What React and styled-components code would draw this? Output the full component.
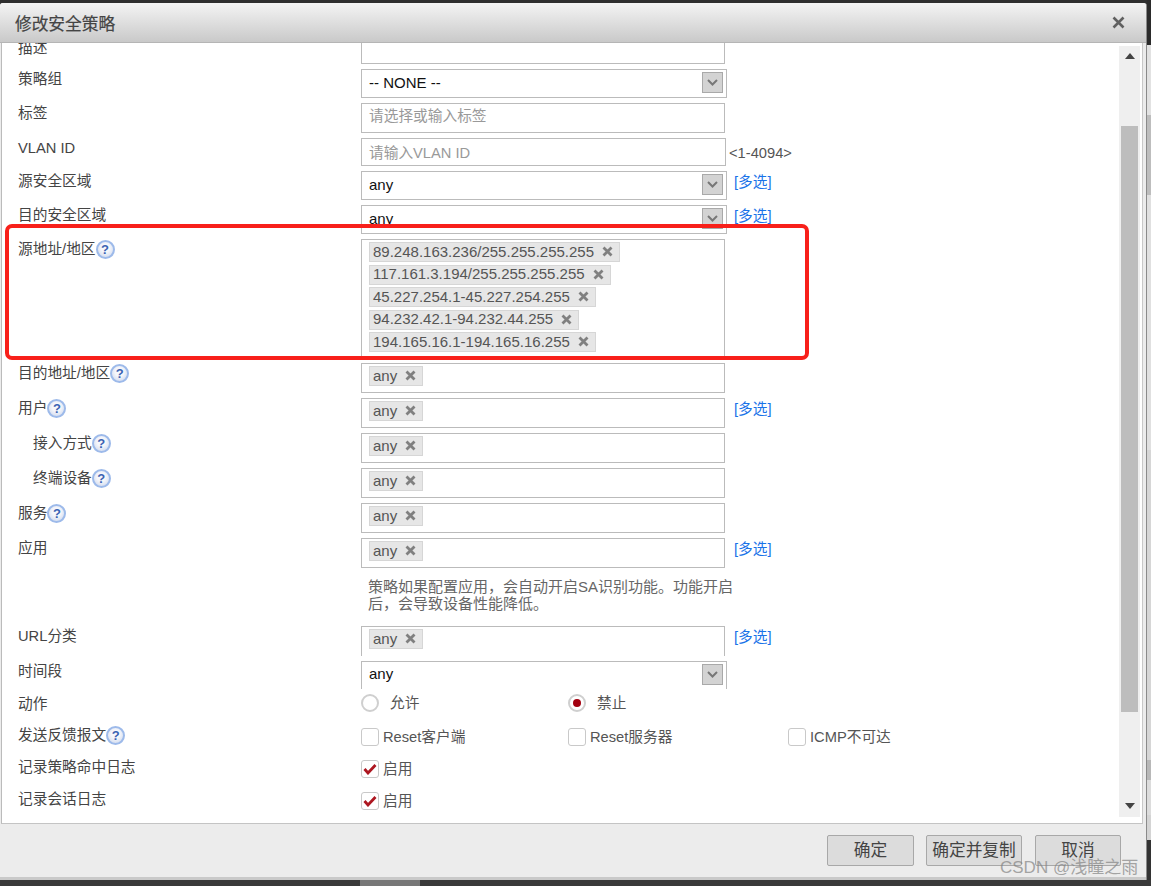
import React from 'react'
import styled, { createGlobalStyle } from 'styled-components'

const GlobalStyle = createGlobalStyle`
  html, body {
    margin: 0;
    padding: 0;
    background: #2f2f2f;
  }
  body {
    font-family: "Liberation Sans", "Noto Sans CJK SC", sans-serif;
    font-size: 14.7px;
    color: #444;
  }
`

const Page = styled.div`
  position: relative;
  display: flex;
  flex-direction: column;
  width: 1151px;
  height: 886px;
  overflow: hidden;
`

const Desk = styled.div`
  display: flex;
  height: 880px;
  padding-top: 3px;
  box-sizing: border-box;
`

const BackStrip = styled.div`
  flex: 1;
  margin-top: -3px;
  background: linear-gradient(
    180deg,
    #2b2b2b 0 45px,
    #e2e2e2 45px 115px,
    #bdbdbd 115px 195px,
    #e0e0e0 195px 450px,
    #d6d6d6 450px 760px,
    #b8b8b8 760px 780px,
    #dcdcdc 780px 815px,
    #d4d4d4 815px 840px,
    #333 840px
  );
`

const BottomStrip = styled.div`
  height: 6px;
  background: linear-gradient(90deg, #3a3a3a 0 360px, #777 360px 420px, #3a3a3a 420px);
`

const Dialog = styled.div`
  width: 1147px;
  display: flex;
  flex-direction: column;
  background: #ececec;
  border-right: 1px solid #8a8a8a;
  box-sizing: border-box;
  border-radius: 3px 3px 0 0;
`

const Header = styled.div`
  height: 39px;
  flex: none;
  display: flex;
  align-items: center;
  justify-content: space-between;
  padding: 0 21px 0 15px;
  background: linear-gradient(180deg, #f4f4f4, #c9c9c9);
  border-bottom: 1px solid #b5b5b5;
  border-radius: 3px 3px 0 0;
`

const Title = styled.div`
  font-size: 16.7px;
  color: #444;
  -webkit-text-stroke: 0.2px #444;
`

const CloseIcon = styled.svg`
  width: 13px;
  height: 13px;
  display: block;
`

const Body = styled.div`
  height: 781px;
  flex: none;
  box-sizing: border-box;
  display: flex;
  margin: 0 3px 0 1px;
  background: #fff;
  border-left: 1px solid #bbb;
  border-right: 1px solid #c8c8c8;
  border-bottom: 1px solid #c4c4c4;
  overflow: hidden;
`

const Scroller = styled.div`
  flex: 1;
  overflow: hidden;
`

const Form = styled.div`
  display: flex;
  flex-direction: column;
  gap: 5px;
  margin-top: -5px;
`

const Row = styled.div`
  display: flex;
  align-items: flex-start;
  ${p => p.$h && `height: ${p.$h}px;`}
`

const Label = styled.div`
  width: 359px;
  flex: none;
  box-sizing: border-box;
  padding-left: ${p => (p.$indent ? 31 : 16)}px;
  padding-top: 0.5px;
  display: flex;
  align-items: center;
  height: 19px;
  line-height: 18px;
  color: #444;
`

const Help = styled.span`
  width: 19px;
  height: 19px;
  margin-top: 2px;
  flex: none;
  border-radius: 50%;
  border: 2px solid #9dbaea;
  box-sizing: border-box;
  background: radial-gradient(circle at 50% 40%, #f6f7fb 0 35%, #c6d2ea 100%);
  color: #3b63b3;
  font-size: 13px;
  font-weight: bold;
  line-height: 15px;
  text-align: center;
`

const Box = styled.div`
  position: relative;
  flex: none;
  box-sizing: border-box;
  width: ${p => p.$w || 364}px;
  height: ${p => p.$h || 30}px;
  border: 1.5px solid #bbb;
  ${p => p.$open && 'border-bottom: none;'}
  background: #fff;
`

const SelectBox = styled(Box)`
  display: flex;
  align-items: ${p => (p.$open ? 'flex-start' : 'center')};
  padding: 0 0 ${p => (p.$open ? 0 : 2)}px 7px;
  font-size: 15px;
  color: #111;
  line-height: 23px;
`

const SelectArrow = styled.span`
  position: absolute;
  top: 2px;
  right: 3px;
  width: 21px;
  height: 21px;
  box-sizing: border-box;
  background: #d3d3d3;
  border: 1.5px solid #a9a9a9;
  display: flex;
  align-items: center;
  justify-content: center;
`

const TextBox = styled(Box)`
  display: flex;
  align-items: ${p => (p.$top ? 'flex-start' : 'center')};
  padding: 0 0 ${p => (p.$top ? 0 : 2)}px 7px;
  color: #999;
`

const TagBox = styled(Box)`
  display: flex;
  flex-direction: column;
  align-items: flex-start;
  gap: 2.5px;
  padding: 2px 0 0 7px;
`

const TagItem = styled.span`
  height: 20px;
  box-sizing: border-box;
  display: inline-flex;
  align-items: center;
  gap: 8px;
  padding: 0 6px 2px 3px;
  background: #e6e6e6;
  border: 1px solid #d6d6d6;
  color: #555;
  font-size: 15px;
`

const TagX = styled.svg`
  width: 11px;
  height: 11px;
  display: block;
  margin-top: 1px;
`

const MultiLink = styled.a`
  margin: 2px 0 0 ${p => p.$ml || 9}px;
  line-height: 18px;
  color: #1a73e8;
`

const RangeHint = styled.span`
  margin: 6px 0 0 3px;
  line-height: 18px;
  color: #555;
`

const HintText = styled.div`
  margin-left: 366px;
  padding: 5px 0 9px;
  width: 372px;
  font-size: 15px;
  line-height: 17px;
  color: #666;
`

const Options = styled.div`
  display: grid;
  grid-template-columns: 207px 220px 1fr;
  flex: 1;
  margin-top: ${p => p.$mt || 0}px;
`

const Option = styled.label`
  display: flex;
  align-items: center;
  gap: ${p => p.$gap || 4}px;
  height: 18px;
  color: #555;
`

const OptionText = styled.span`
  margin-bottom: 3px;
`

const RadioMark = styled.span`
  width: 18px;
  height: 18px;
  box-sizing: border-box;
  border-radius: 50%;
  border: 2px solid #cfcfcf;
  background: #fff;
  display: flex;
  align-items: center;
  justify-content: center;
  &::after {
    content: "";
    width: 8px;
    height: 8px;
    border-radius: 50%;
    background: ${p => (p.$on ? '#a30010' : 'transparent')};
  }
`

const CheckMark = styled.span`
  width: 18px;
  height: 18px;
  flex: none;
  box-sizing: border-box;
  border-radius: 3px;
  border: 1.5px solid #c9c9c9;
  background: #fff;
  display: flex;
  align-items: center;
  justify-content: center;
`

const ScrollTrack = styled.div`
  width: 21px;
  flex: none;
  margin: 3px 2px 6px 0;
  background: #efefef;
  display: flex;
  flex-direction: column;
`

const ArrowCell = styled.div`
  display: flex;
  justify-content: center;
  height: ${p => p.$h}px;
  flex: ${p => (p.$grow ? 1 : 'none')};
  align-items: ${p => (p.$grow ? 'flex-end' : 'flex-start')};
  padding: ${p => (p.$grow ? '0 0 8px' : '7px 0 0')};
  box-sizing: border-box;
`

const ScrollThumb = styled.div`
  width: 17px;
  height: 586px;
  margin-left: 2px;
  background: #bdbdbd;
`

const Footer = styled.div`
  height: 42px;
  flex: none;
  display: flex;
  justify-content: flex-end;
  gap: 12px;
  padding: 11px 25px 0 0;
  border-bottom: 3px solid #c9c9c9;
  background: #ececec;
`

const Button = styled.button`
  width: ${p => p.$w}px;
  height: 31px;
  margin-left: ${p => p.$ml || 0}px;
  padding: 0 0 3px;
  font: inherit;
  font-size: 16.7px;
  color: #444;
  background: #dcdcdc;
  border: 1.5px solid #a8a8a8;
  border-radius: 2px;
`

const RedFrame = styled.div`
  position: absolute;
  left: 5px;
  top: 224px;
  width: 804px;
  height: 136px;
  box-sizing: border-box;
  border: 4px solid #f8201a;
  border-radius: 7px;
  pointer-events: none;
`

const Watermark = styled.div`
  position: absolute;
  left: 1000px;
  top: 857px;
  font-size: 17px;
  line-height: 22px;
  color: rgba(130, 130, 130, 0.7);
  white-space: nowrap;
`

const Chevron = () => (
  <svg width="13" height="9" viewBox="0 0 13 9">
    <path d="M2 2l4.5 4.5L11 2" fill="none" stroke="#777" strokeWidth="2" />
  </svg>
)

const Select = ({ value, h = 29, open }) => (
  <SelectBox $w={366} $h={h} $open={open}>
    {value}
    <SelectArrow>
      <Chevron />
    </SelectArrow>
  </SelectBox>
)

const Tag = ({ children }) => (
  <TagItem>
    {children}
    <TagX viewBox="0 0 11 11">
      <path d="M1.5 1.5l8 8M9.5 1.5l-8 8" stroke="#808080" strokeWidth="2.8" fill="none" />
    </TagX>
  </TagItem>
)

const AnyBox = ({ open }) => (
  <TagBox $h={30} $open={open}>
    <Tag>any</Tag>
  </TagBox>
)

const Check = () => (
  <svg width="14" height="12" viewBox="0 0 14 12">
    <path d="M1.5 6l3.5 4L12.5 2" fill="none" stroke="#ad1620" strokeWidth="2.8" />
  </svg>
)

const sourceAddresses = [
  '89.248.163.236/255.255.255.255',
  '117.161.3.194/255.255.255.255',
  '45.227.254.1-45.227.254.255',
  '94.232.42.1-94.232.44.255',
  '194.165.16.1-194.165.16.255',
]

export default function App() {
  return (
    <Page>
      <GlobalStyle />
      <Desk>
        <Dialog>
          <Header>
            <Title>修改安全策略</Title>
            <CloseIcon viewBox="0 0 13 13">
              <path d="M1.5 1.5l10 10M11.5 1.5l-10 10" stroke="#606060" strokeWidth="2.6" fill="none" />
            </CloseIcon>
          </Header>
          <Body>
            <Scroller>
              <Form>
                <Row>
                  <Label>描述</Label>
                  <Box $h={26} />
                </Row>
                <Row>
                  <Label>策略组</Label>
                  <Select value="-- NONE --" />
                </Row>
                <Row>
                  <Label>标签</Label>
                  <TextBox $top>请选择或输入标签</TextBox>
                </Row>
                <Row>
                  <Label>VLAN ID</Label>
                  <TextBox $h={28} $w={365}>请输入VLAN ID</TextBox>
                  <RangeHint>&lt;1-4094&gt;</RangeHint>
                </Row>
                <Row>
                  <Label>源安全区域</Label>
                  <Select value="any" />
                  <MultiLink $ml={7}>[多选]</MultiLink>
                </Row>
                <Row>
                  <Label>目的安全区域</Label>
                  <Select value="any" />
                  <MultiLink $ml={7}>[多选]</MultiLink>
                </Row>
                <Row>
                  <Label>源地址/地区<Help>?</Help></Label>
                  <TagBox $h={119}>
                    {sourceAddresses.map(addr => (
                      <Tag key={addr}>{addr}</Tag>
                    ))}
                  </TagBox>
                </Row>
                <Row>
                  <Label>目的地址/地区<Help>?</Help></Label>
                  <AnyBox />
                </Row>
                <Row>
                  <Label>用户<Help>?</Help></Label>
                  <AnyBox />
                  <MultiLink>[多选]</MultiLink>
                </Row>
                <Row>
                  <Label $indent>接入方式<Help>?</Help></Label>
                  <AnyBox />
                </Row>
                <Row>
                  <Label $indent>终端设备<Help>?</Help></Label>
                  <AnyBox />
                </Row>
                <Row>
                  <Label>服务<Help>?</Help></Label>
                  <AnyBox />
                </Row>
                <Row>
                  <Label>应用</Label>
                  <AnyBox />
                  <MultiLink>[多选]</MultiLink>
                </Row>
                <HintText>策略如果配置应用，会自动开启SA识别功能。功能开启后，会导致设备性能降低。</HintText>
                <Row>
                  <Label>URL分类</Label>
                  <AnyBox open />
                  <MultiLink>[多选]</MultiLink>
                </Row>
                <Row>
                  <Label>时间段</Label>
                  <Select value="any" h={28} open />
                </Row>
                <Row $h={26}>
                  <Label>动作</Label>
                  <Options>
                    <Option $gap={11}><RadioMark /><OptionText>允许</OptionText></Option>
                    <Option $gap={11}><RadioMark $on /><OptionText>禁止</OptionText></Option>
                  </Options>
                </Row>
                <Row $h={27}>
                  <Label>发送反馈报文<Help>?</Help></Label>
                  <Options $mt={3}>
                    <Option><CheckMark /><OptionText>Reset客户端</OptionText></Option>
                    <Option><CheckMark /><OptionText>Reset服务器</OptionText></Option>
                    <Option><CheckMark /><OptionText>ICMP不可达</OptionText></Option>
                  </Options>
                </Row>
                <Row $h={27}>
                  <Label>记录策略命中日志</Label>
                  <Options $mt={3}>
                    <Option><CheckMark><Check /></CheckMark><OptionText>启用</OptionText></Option>
                  </Options>
                </Row>
                <Row $h={27}>
                  <Label>记录会话日志</Label>
                  <Options $mt={3}>
                    <Option><CheckMark><Check /></CheckMark><OptionText>启用</OptionText></Option>
                  </Options>
                </Row>
              </Form>
            </Scroller>
            <ScrollTrack>
              <ArrowCell $h={80}>
                <svg width="10" height="6" viewBox="0 0 10 6"><path d="M5 0l5 6H0z" fill="#444" /></svg>
              </ArrowCell>
              <ScrollThumb />
              <ArrowCell $grow>
                <svg width="10" height="6" viewBox="0 0 10 6"><path d="M0 0h10L5 6z" fill="#444" /></svg>
              </ArrowCell>
            </ScrollTrack>
          </Body>
          <Footer>
            <Button $w={87}>确定</Button>
            <Button $w={96}>确定并复制</Button>
            <Button $w={86} $ml={1}>取消</Button>
          </Footer>
        </Dialog>
        <BackStrip />
      </Desk>
      <BottomStrip />
      <RedFrame />
      <Watermark>CSDN @浅瞳之雨</Watermark>
    </Page>
  )
}
